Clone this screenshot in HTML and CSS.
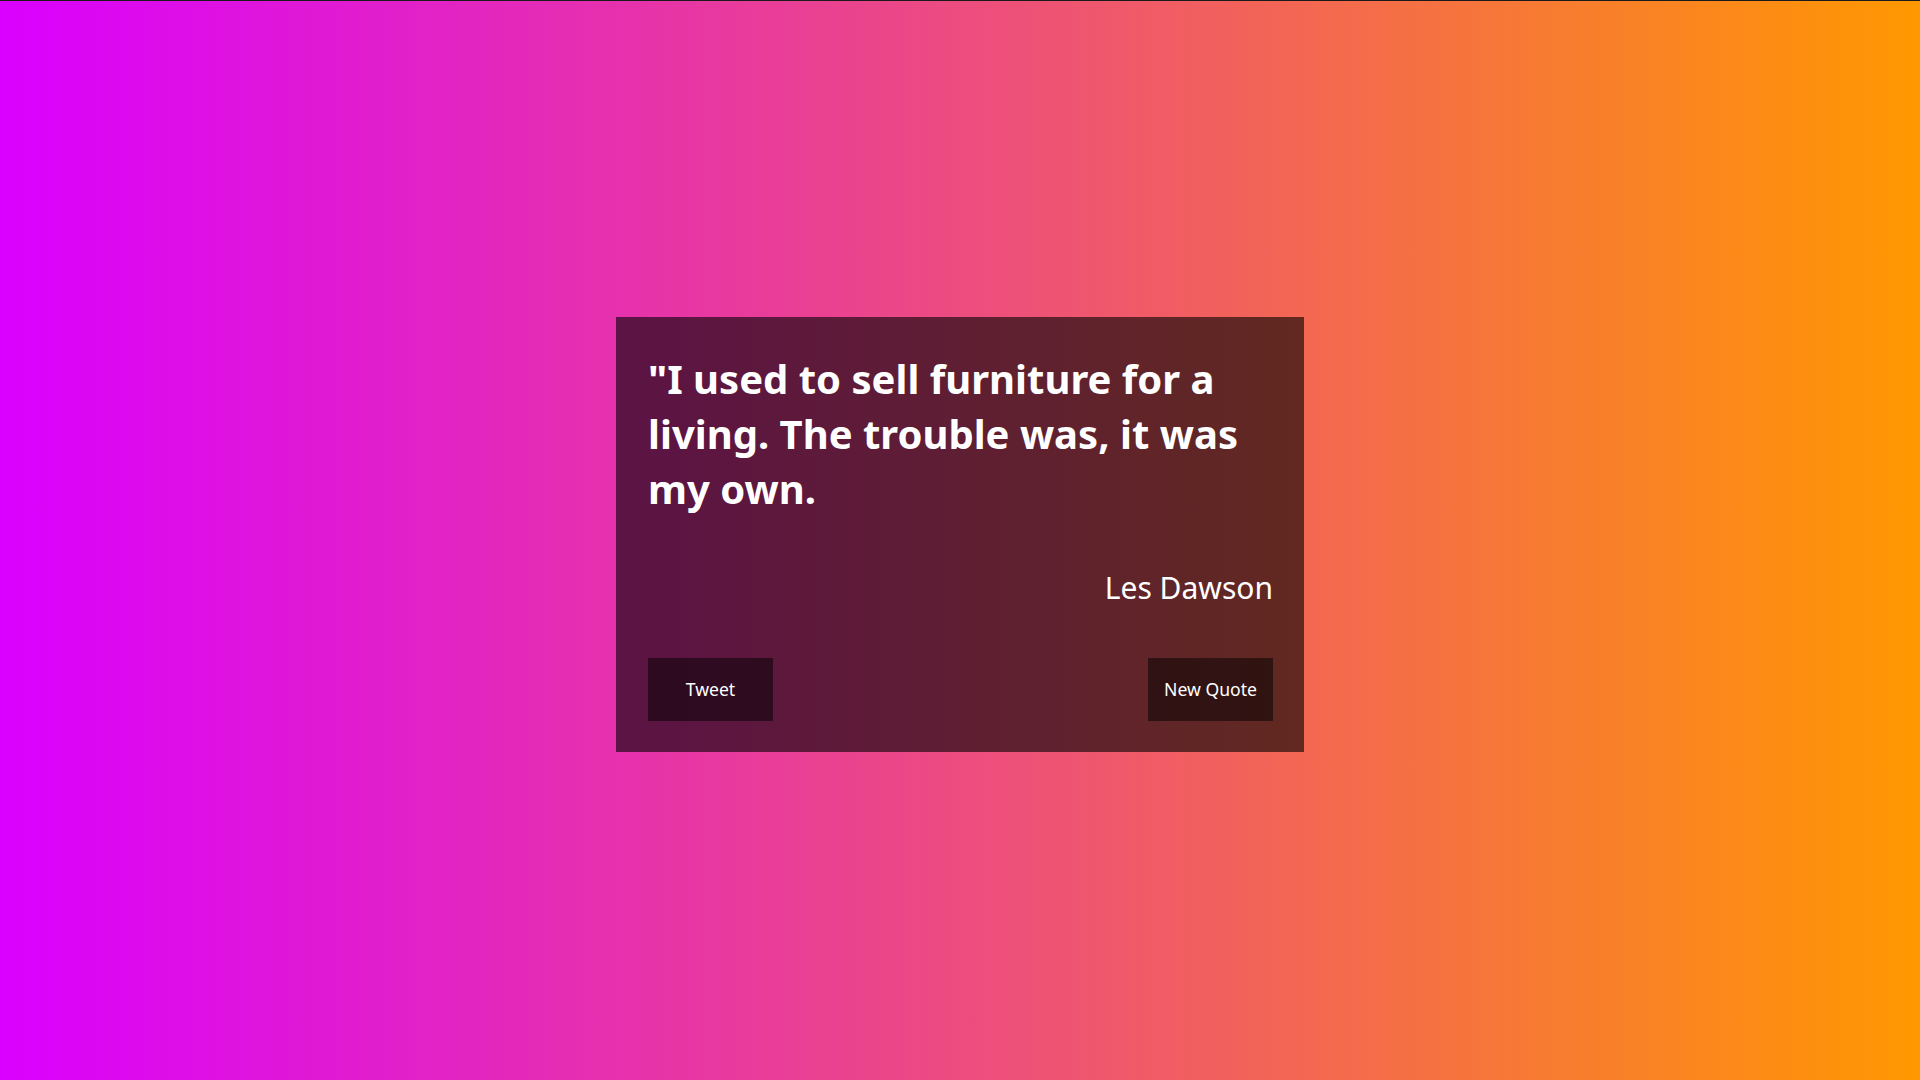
FILE: index.html
```html
<!DOCTYPE html>
<html lang="en">
<head>
<meta charset="utf-8">
<title>Random Quote Machine</title>
<link rel="stylesheet" href="styles.css">
</head>
<body>
<main class="page">
  <div class="quote-box">
    <p class="quote-text">"I used to sell furniture for a living. The trouble was, it was my own.</p>
    <p class="quote-author">Les Dawson</p>
    <div class="actions">
      <a class="btn" href="#">Tweet</a>
      <button class="btn" type="button">New Quote</button>
    </div>
  </div>
</main>
</body>
</html>
```
FILE: styles.css
```css
html, body {
  margin: 0;
  padding: 0;
}
body {
  min-height: 100vh;
  box-sizing: border-box;
  border-top: 1px solid #1a1a1a;
  background: linear-gradient(to right, #da00ff, #ff9800);
  font-family: "Noto Sans", "Open Sans", sans-serif;
  color: #fff;
}
.page {
  display: flex;
  justify-content: center;
  padding-top: 316px;
}
.quote-box {
  width: 688px;
  height: 435px;
  box-sizing: border-box;
  padding: 32px 31px 31px 32px;
  background: rgba(0, 0, 0, 0.6);
  display: flex;
  flex-direction: column;
}
.quote-text {
  margin: 2px 0 0;
  font-size: 40px;
  font-weight: 700;
  line-height: 55px;
}
.quote-author {
  margin: 49px 0 0;
  text-align: right;
  font-size: 30px;
  line-height: 45px;
}
.actions {
  margin-top: auto;
  display: flex;
  justify-content: space-between;
}
.btn {
  width: 125px;
  height: 63px;
  box-sizing: border-box;
  display: flex;
  align-items: center;
  justify-content: center;
  background: rgba(0, 0, 0, 0.5);
  color: #fff;
  border: none;
  font-family: "Noto Sans", "Open Sans", sans-serif;
  font-size: 17.6px;
  line-height: 1;
  text-decoration: none;
  padding: 0;
}
```
